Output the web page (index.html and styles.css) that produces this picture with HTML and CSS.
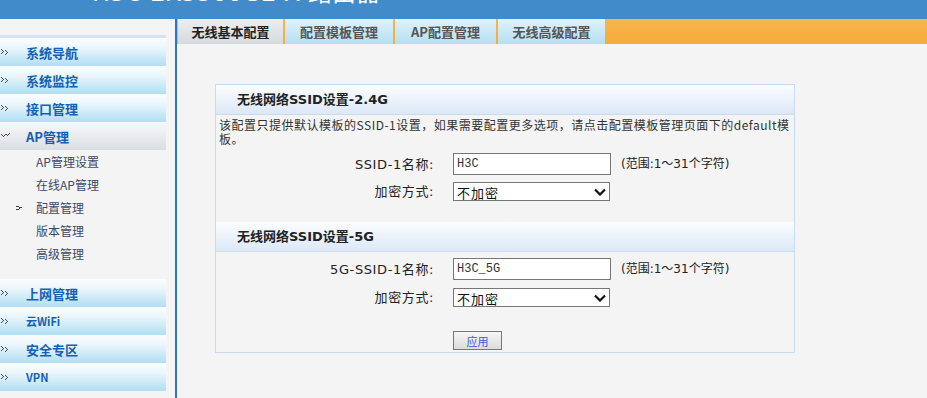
FILE: index.html
```html
<!DOCTYPE html>
<html lang="zh-CN">
<head>
    <meta charset="UTF-8">
    <title>无线基本配置</title>
    <link rel="stylesheet" href="styles.css">
</head>
<body>

<div class="top">
    <span class="logo">H3C</span>
    <span class="title">H3C ER3300G2-X 路由器</span>
</div>

<div class="frame">
    <aside class="menu">
        <ul class="nav">
            <li class="nav-item"><svg class="ico" width="9" height="7" viewBox="0 0 9 7"><path d="M0 0h1v1H0zM1 1h1v1H1zM2 2h1v1H2zM1 3h1v1H1zM0 4h1v1H0zM4 1h1v1H4zM5 2h1v1H5zM6 3h1v1H6zM5 4h1v1H5zM4 5h1v1H4z" fill="#222"/></svg>系统导航</li>
            <li class="nav-item"><svg class="ico" width="9" height="7" viewBox="0 0 9 7"><path d="M0 0h1v1H0zM1 1h1v1H1zM2 2h1v1H2zM1 3h1v1H1zM0 4h1v1H0zM4 1h1v1H4zM5 2h1v1H5zM6 3h1v1H6zM5 4h1v1H5zM4 5h1v1H4z" fill="#222"/></svg>系统监控</li>
            <li class="nav-item"><svg class="ico" width="9" height="7" viewBox="0 0 9 7"><path d="M0 0h1v1H0zM1 1h1v1H1zM2 2h1v1H2zM1 3h1v1H1zM0 4h1v1H0zM4 1h1v1H4zM5 2h1v1H5zM6 3h1v1H6zM5 4h1v1H5zM4 5h1v1H4z" fill="#222"/></svg>接口管理</li>
            <li class="nav-item open"><svg class="ico" width="9" height="7" viewBox="0 0 9 7"><path d="M0 1h1v1H0zM1 2h1v1H1zM2 3h1v1H2zM3 2h1v1H3zM4 1h1v1H4zM5 1h1v1H5zM6 2h1v1H6zM7 1h1v1H7zM8 0h1v1H8z" fill="#222"/></svg>AP管理</li>
        </ul>
        <ul class="sub">
            <li>AP管理设置</li>
            <li>在线AP管理</li>
            <li class="current"><svg class="sub-ico" width="6" height="4" viewBox="0 0 6 4"><path d="M0 0h3v1H0zM3 1h3v1H3zM0 3h3v1H0zM3 2h1v1H3z" fill="#2d3c5c"/></svg>配置管理</li>
            <li>版本管理</li>
            <li>高级管理</li>
        </ul>
        <ul class="nav">
            <li class="nav-item"><svg class="ico" width="9" height="7" viewBox="0 0 9 7"><path d="M0 0h1v1H0zM1 1h1v1H1zM2 2h1v1H2zM1 3h1v1H1zM0 4h1v1H0zM4 1h1v1H4zM5 2h1v1H5zM6 3h1v1H6zM5 4h1v1H5zM4 5h1v1H4z" fill="#222"/></svg>上网管理</li>
            <li class="nav-item small"><svg class="ico" width="9" height="7" viewBox="0 0 9 7"><path d="M0 0h1v1H0zM1 1h1v1H1zM2 2h1v1H2zM1 3h1v1H1zM0 4h1v1H0zM4 1h1v1H4zM5 2h1v1H5zM6 3h1v1H6zM5 4h1v1H5zM4 5h1v1H4z" fill="#222"/></svg>云WiFi</li>
            <li class="nav-item"><svg class="ico" width="9" height="7" viewBox="0 0 9 7"><path d="M0 0h1v1H0zM1 1h1v1H1zM2 2h1v1H2zM1 3h1v1H1zM0 4h1v1H0zM4 1h1v1H4zM5 2h1v1H5zM6 3h1v1H6zM5 4h1v1H5zM4 5h1v1H4z" fill="#222"/></svg>安全专区</li>
            <li class="nav-item small"><svg class="ico" width="9" height="7" viewBox="0 0 9 7"><path d="M0 0h1v1H0zM1 1h1v1H1zM2 2h1v1H2zM1 3h1v1H1zM0 4h1v1H0zM4 1h1v1H4zM5 2h1v1H5zM6 3h1v1H6zM5 4h1v1H5zM4 5h1v1H4z" fill="#222"/></svg>VPN</li>
        </ul>
    </aside>

    <main class="main">
        <div class="tabs">
            <div class="tab active">无线基本配置</div>
            <div class="tab t2">配置模板管理</div>
            <div class="tab t3">AP配置管理</div>
            <div class="tab t4">无线高级配置</div>
        </div>

        <div class="panel">
            <div class="panel-head">无线网络SSID设置-2.4G</div>
            <div class="panel-body first">
                <p class="desc">该配置只提供默认模板的SSID-1设置，如果需要配置更多选项，请点击配置模板管理页面下的default模板。</p>
                <div class="row">
                    <label for="ssid24">SSID-1名称:</label>
                    <input type="text" id="ssid24" value="H3C">
                    <span class="hint">(范围:1～31个字符)</span>
                </div>
                <div class="row">
                    <label for="enc24">加密方式:</label>
                    <span class="select-wrap">
                        <select id="enc24"><option>不加密</option></select>
                        <svg class="chev" width="12" height="8" viewBox="0 0 12 8"><path d="M1 1.5l5 5 5-5" fill="none" stroke="#111" stroke-width="2.2"/></svg>
                    </span>
                </div>
            </div>

            <div class="panel-head">无线网络SSID设置-5G</div>
            <div class="panel-body second">
                <div class="row">
                    <label for="ssid5">5G-SSID-1名称:</label>
                    <input type="text" id="ssid5" value="H3C_5G">
                    <span class="hint">(范围:1～31个字符)</span>
                </div>
                <div class="row">
                    <label for="enc5">加密方式:</label>
                    <span class="select-wrap">
                        <select id="enc5"><option>不加密</option></select>
                        <svg class="chev" width="12" height="8" viewBox="0 0 12 8"><path d="M1 1.5l5 5 5-5" fill="none" stroke="#111" stroke-width="2.2"/></svg>
                    </span>
                </div>
                <div class="row btn-row">
                    <button type="button">应用</button>
                </div>
            </div>
        </div>
    </main>
</div>

</body>
</html>
```

FILE: styles.css
```css
body {
    margin: 0;
    background-color: #f4f4f4;
    font-family: "Liberation Sans", "Noto Sans CJK SC", sans-serif;
    font-size: 13px;
    color: #333;
    height: 398px;
    overflow: hidden;
}

ul {
    list-style: none;
    margin: 0;
    padding: 0;
}

/* top banner, scrolled so only its bottom is visible */
.top {
    height: 19px;
    background-color: #418bca;
    overflow: hidden;
    display: flex;
    align-items: flex-end;
    color: #fff;
}

.top span {
    line-height: 1;
    margin-bottom: 14px;
    font-family: "DejaVu Sans", "Noto Sans CJK SC", sans-serif;
}

.logo {
    font-size: 30px;
    font-weight: bold;
    margin-left: 4px;
}

.title {
    font-size: 24px;
    margin-left: 20px;
}

.frame {
    display: flex;
    height: 379px;
}

/* left menu */
.menu {
    width: 175px;
    flex: none;
    border-right: 2px solid #2c72cf;
    padding-top: 16px;
}

.menu .nav:first-child {
    border-top: 3px solid #d3e3f1;
    width: 166px;
}

.nav-item {
    width: 166px;
    height: 28px;
    display: flex;
    align-items: center;
    background: linear-gradient(#fbfdff, #eaf6fc 35%, #b1def2);
    font-family: "Noto Sans CJK SC", sans-serif;
    font-weight: bold;
    font-size: 13px;
    color: #1360b4;
}

.nav-item.small {
    font-size: 11px;
}

.nav-item.open {
    background: linear-gradient(#f7f8f9, #e9ecef 50%, #d9dee3);
}

.ico {
    margin-left: 1px;
    margin-right: 16px;
    opacity: 0.8;
}

.sub {
    margin-bottom: 14px;
}

.sub li {
    height: 23px;
    line-height: 23px;
    padding-left: 36px;
    font-family: "Noto Sans CJK SC", sans-serif;
    font-size: 12px;
    color: #3b4a66;
    position: relative;
}

.sub-ico {
    position: absolute;
    left: 16px;
    top: 10px;
}

/* content */
.main {
    flex: 1;
}

.tabs {
    height: 25px;
    display: flex;
    padding-left: 1px;
    background: linear-gradient(#f8b44e, #f5ac38);
}

.tab {
    height: 25px;
    line-height: 25px;
    width: 105px;
    margin-right: 2px;
    text-align: center;
    font-family: "Noto Sans CJK SC", sans-serif;
    font-weight: bold;
    font-size: 13px;
    color: #555;
    background: linear-gradient(#e0f2fb, #b4dff1);
}

.tab.active {
    color: #222;
    background: linear-gradient(#eceeef, #d6dadd);
}

.tab.t2 { width: 108px; }
.tab.t3 { width: 101px; }
.tab.t4 { width: 107px; }

.panel {
    width: 578px;
    margin: 40px 0 0 38px;
    border: 1px solid #c8dcef;
}

.panel-head {
    height: 29px;
    line-height: 29px;
    padding-left: 21px;
    border-bottom: 1px solid #c8dcef;
    background: linear-gradient(#fbfdff, #dce8f7);
    font-family: "DejaVu Sans", "Noto Sans CJK SC", sans-serif;
    font-weight: bold;
    font-size: 13px;
    color: #222;
}

.panel-body.first {
    padding: 3px 0 21px;
}

.panel-body.second {
    padding: 6px 0 2px;
}

.desc {
    margin: 0 0 7px;
    padding: 0 4px 0 3px;
    font-family: "Noto Sans CJK SC", sans-serif;
    font-size: 12px;
    letter-spacing: 0.5px;
    line-height: 14px;
    color: #333;
}

.row {
    display: flex;
    align-items: center;
    margin-bottom: 7px;
}

.row:last-child {
    margin-bottom: 0;
}

.second .row {
    margin-bottom: 8px;
}

.second .row.btn-row {
    margin-top: 24px;
    margin-bottom: 0;
}

.row label {
    width: 218px;
    margin-right: 19px;
    text-align: right;
    font-family: "DejaVu Sans", "Noto Sans CJK SC", sans-serif;
    font-size: 13px;
    line-height: 19px;
    letter-spacing: 0.6px;
    color: #222;
}

.row input[type="text"] {
    width: 158px;
    height: 22px;
    box-sizing: border-box;
    border: 1px solid #777;
    padding: 0 3px;
    font-family: "Liberation Mono", monospace;
    font-size: 12px;
    color: #333;
    background: #fff;
}

.hint {
    margin-left: 10px;
    font-family: "DejaVu Sans", "Noto Sans CJK SC", sans-serif;
    font-size: 12px;
    line-height: 19px;
    color: #222;
}

.select-wrap {
    position: relative;
    display: flex;
    height: 19px;
}

.select-wrap select {
    -webkit-appearance: none;
    appearance: none;
    width: 157px;
    height: 19px;
    box-sizing: border-box;
    border: 1px solid #777;
    border-radius: 0;
    padding: 0 3px;
    background: #fff;
    font-family: "Noto Sans CJK SC", sans-serif;
    font-size: 13px;
    letter-spacing: 1px;
    color: #111;
}

.chev {
    position: absolute;
    right: 4px;
    top: 6px;
    pointer-events: none;
}

.btn-row button {
    margin-left: 237px;
    width: 49px;
    height: 19px;
    border: 1px solid #777;
    background: linear-gradient(#f6f6f6, #dcdcdc);
    font-family: "Noto Sans CJK SC", sans-serif;
    font-size: 11px;
    color: #3a5bd9;
    padding: 0;
}
```
